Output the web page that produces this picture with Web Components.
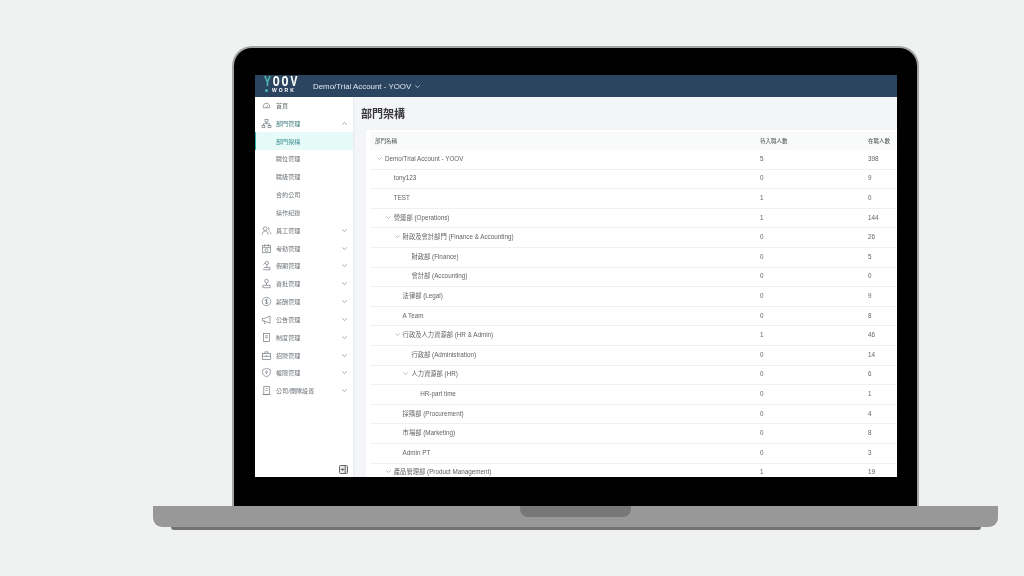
<!DOCTYPE html>
<html lang="zh-Hant">
<head>
<meta charset="utf-8">
<title>部門架構</title>
<style>
    html, body { margin: 0; height: 100%; }
    body { background: #f0f2f1; overflow: hidden; font-family: "Liberation Sans", "Noto Sans CJK TC", sans-serif; }
</style>
</head>
<body>
<laptop-frame>
    <app-header>Demo/Trial Account - YOOV</app-header>
    <div slot="sidebar"><side-nav></side-nav></div>
    <div slot="main"><dept-page></dept-page></div>
</laptop-frame>

<script>
const ICONS = {
    home: '<path d="M2.5 8.5a3.7 3.7 0 1 1 7 0z"/><path d="M6 8.3 7.4 5.6"/>',
    org: '<rect x="4.4" y="1.5" width="3.2" height="2.8"/><rect x="1.2" y="8" width="3" height="2.6"/><rect x="7.8" y="8" width="3" height="2.6"/><path d="M6 4.3V6.2M2.7 8V6.2H9.3V8"/>',
    people: '<circle cx="4.5" cy="4" r="2"/><path d="M1.2 10.5c.3-2.6 1.6-3.9 3.3-3.9s3 1.3 3.3 3.9"/><path d="M7.6 2.2a2 2 0 0 1 0 3.7M9 6.9c1 .6 1.6 1.8 1.8 3.2"/>',
    clock: '<rect x="1.8" y="2.6" width="8.4" height="8"/><path d="M4 1.2V4M8 1.2V4M1.8 5H10.2"/><circle cx="6" cy="7.8" r="1.6"/>',
    leave: '<circle cx="6.4" cy="3.2" r="1.8"/><path d="M6.4 5v3M2 10.6h8M3 8.2h6.6v2.4"/><path d="M2.6 4.8 4.4 3.4"/>',
    approve: '<circle cx="6" cy="3.4" r="2"/><path d="M6 5.4v2.4M2 8h8v2.6H2z"/>',
    money: '<circle cx="6" cy="6" r="4.6"/><path d="M7.5 4.4C7 3.8 5 3.6 4.7 4.8c-.3 1.4 2.8 1 2.7 2.5-.1 1.2-2.2 1.2-3 .4M6 3v6"/>',
    notice: '<path d="M1.6 4.8v2.8h2L9.8 10V2.4L3.6 4.8z"/><path d="M3.4 7.6 4 10.4h1.2"/>',
    rules: '<rect x="2.6" y="1.6" width="6.8" height="8.8"/><path d="M4.4 4.2h3.2M4.4 6.2h3.2"/>',
    jobs: '<rect x="1.5" y="3.8" width="9" height="6.6"/><path d="M4.3 3.8V2h3.4v1.8M1.5 6.8h9M6 6v1.6"/>',
    shield: '<path d="M6 1.4 10.2 3v3.2c0 2.2-1.8 3.7-4.2 4.4-2.4-.7-4.2-2.2-4.2-4.4V3z"/><circle cx="6" cy="5.2" r="1"/><path d="M6 6.2v1.6"/>',
    building: '<path d="M3 1.6h6.2v8.8H3zM1.6 10.4h9"/><path d="M5 4h2.2M5 6h2.2"/>',
}

const NAV = [
    { icon: "home", label: "首頁" },
    { icon: "org", label: "部門管理", open: true },
    { label: "部門架構", sub: true, active: true },
    { label: "職位管理", sub: true },
    { label: "職級管理", sub: true },
    { label: "合約公司", sub: true },
    { label: "操作紀錄", sub: true },
    { icon: "people", label: "員工管理", more: true },
    { icon: "clock", label: "考勤管理", more: true },
    { icon: "leave", label: "假期管理", more: true },
    { icon: "approve", label: "審批管理", more: true },
    { icon: "money", label: "薪酬管理", more: true },
    { icon: "notice", label: "公告管理", more: true },
    { icon: "rules", label: "制度管理", more: true },
    { icon: "jobs", label: "招聘管理", more: true },
    { icon: "shield", label: "權限管理", more: true },
    { icon: "building", label: "公司/團隊設置", more: true },
]

// name, level, has children, waiting, current
const ROWS = [
    ["Demo/Trial Account - YOOV", 0, true, 5, 398],
    ["tony123", 1, false, 0, 9],
    ["TEST", 1, false, 1, 0],
    ["營運部 (Operations)", 1, true, 1, 144],
    ["財政及會計部門 (Finance & Accounting)", 2, true, 0, 26],
    ["財政部 (Finance)", 3, false, 0, 5],
    ["會計部 (Accounting)", 3, false, 0, 0],
    ["法律部 (Legal)", 2, false, 0, 9],
    ["A Team", 2, false, 0, 8],
    ["行政及人力資源部 (HR & Admin)", 2, true, 1, 46],
    ["行政部 (Administration)", 3, false, 0, 14],
    ["人力資源部 (HR)", 3, true, 0, 6],
    ["HR-part time", 4, false, 0, 1],
    ["採購部 (Procurement)", 2, false, 0, 4],
    ["市場部 (Marketing)", 2, false, 0, 8],
    ["Admin PT", 2, false, 0, 3],
    ["產品管理部 (Product Management)", 1, true, 1, 19],
]

const chevron = (dir) => `<svg width="7" height="7" viewBox="0 0 8 8" fill="none" stroke="currentColor" stroke-width=".8"><path d="${dir == "up" ? "M1.5 5.2 4 2.8 6.5 5.2" : "M1.5 2.8 4 5.2 6.5 2.8"}"/></svg>`

customElements.define("laptop-frame", class extends HTMLElement {
    connectedCallback() {
        this.attachShadow({mode: "open"}).innerHTML = `
            <style>
                :host { display: flex; flex-direction: column; align-items: center; width: 845px; margin-left: 153px; padding-top: 46px; }
                .lid {
                    box-sizing: border-box;
                    width: 687px;
                    height: 460px;
                    padding: 27px 21px 29px 21px;
                    background: #000;
                    border: 2px solid #a3a5a5;
                    border-bottom: 0;
                    border-radius: 20px 20px 0 0;
                }
                .screen { display: flex; flex-direction: column; width: 642px; height: 402px; background: #f3f5f9; overflow: hidden; filter: blur(.3px); }
                .body { display: flex; flex: 1; min-height: 0; }
                .base { display: flex; justify-content: center; width: 845px; height: 21px; background: #989898; border-radius: 0 0 9px 9px; }
                .notch { width: 111px; height: 11px; background: #777; border-radius: 0 0 8px 8px; }
                .foot { width: 810px; height: 3px; background: #737373; border-radius: 0 0 3px 3px; }
                ::slotted([slot="sidebar"]) { flex: none; width: 98px; display: flex; }
                ::slotted([slot="main"]) { flex: 1; min-width: 0; }
            </style>
            <div class="lid">
                <div class="screen">
                    <slot></slot>
                    <div class="body">
                        <slot name="sidebar"></slot>
                        <slot name="main"></slot>
                    </div>
                </div>
            </div>
            <div class="base"><div class="notch"></div></div>
            <div class="foot"></div>
        `
    }
})

customElements.define("app-header", class extends HTMLElement {
    connectedCallback() {
        this.attachShadow({mode: "open"}).innerHTML = `
            <style>
                :host { display: flex; flex: none; align-items: center; height: 22px; padding-left: 9px; background: #2b4560; color: #dfe6ec; font-size: 7.9px; }
                .logo { display: flex; flex-direction: column; width: 49px; margin-bottom: 3px; color: #fff; font-weight: 700; line-height: 1; }
                .yoov { height: 11px; line-height: 11px; font-size: 11.5px; letter-spacing: 1.9px; font-family: "Liberation Mono", monospace; transform: scaleY(1.25); transform-origin: 0 45%; }
                .yoov b { color: #4bb8b0; }
                .work { display: flex; align-items: center; gap: 4px; height: 5px; margin-top: 1px; font-size: 5px; letter-spacing: 2px; }
                .work i { width: 3px; height: 3px; margin-left: 1px; border-radius: 50%; background: #4bb8b0; }
                .account { display: flex; align-items: center; gap: 3px; }
            </style>
            <div class="logo">
                <div class="yoov"><b>Y</b>OOV</div>
                <div class="work"><i></i>WORK</div>
            </div>
            <div class="account"><slot></slot>${chevron("down")}</div>
        `
    }
})

customElements.define("nav-item", class extends HTMLElement {
    connectedCallback() {
        const icon = this.getAttribute("icon")
        const arrow = this.getAttribute("arrow")
        this.attachShadow({mode: "open"}).innerHTML = `
            <style>
                :host { display: flex; align-items: center; box-sizing: border-box; height: 17.85px; padding: 0 5px 0 6px; color: #6d747a; font-size: 6.1px; }
                :host([open]) { color: #3f7d80; }
                :host([sub]) { padding-left: 21px; }
                :host([active]) { background: #e6faf8; color: #3f8f92; box-shadow: inset 1px 0 #2fb5ab; }
                .icon { flex: none; width: 11px; height: 11px; margin-right: 4px; color: #7a8085; }
                .label { flex: 1; white-space: nowrap; }
                .arrow { display: flex; color: #7f868b; }
            </style>
            ${icon ? `<svg class="icon" viewBox="0 0 12 12" fill="none" stroke="currentColor" stroke-width=".8">${ICONS[icon]}</svg>` : ""}
            <span class="label"><slot></slot></span>
            ${arrow ? `<span class="arrow">${chevron(arrow)}</span>` : ""}
        `
    }
})

customElements.define("side-nav", class extends HTMLElement {
    connectedCallback() {
        const root = this.attachShadow({mode: "open"})
        root.innerHTML = `
            <style>
                :host { display: flex; flex-direction: column; flex: 1; background: #fff; box-shadow: 1px 0 2px #0000000d; }
                nav { flex: 1; margin-top: -.6px; }
                .collapse { display: flex; justify-content: flex-end; padding: 0 5px 3px 0; color: #666; }
            </style>
            <nav></nav>
            <div class="collapse">
                <svg width="9" height="9" viewBox="0 0 9 9" fill="#e8e8e8" stroke="currentColor" stroke-width="1"><rect x=".5" y=".5" width="8" height="8" rx="1"/><path d="M1.8 4.5H4.6M3.4 3.2 4.7 4.5 3.4 5.8M6.2 1V8" fill="none"/></svg>
            </div>
        `
        const nav = root.querySelector("nav")
        NAV.forEach(item => {
            const el = document.createElement("nav-item")
            el.textContent = item.label
            if (item.icon) el.setAttribute("icon", item.icon)
            if (item.sub) el.setAttribute("sub", "")
            if (item.active) el.setAttribute("active", "")
            if (item.open) { el.setAttribute("open", ""); el.setAttribute("arrow", "up") }
            if (item.more) el.setAttribute("arrow", "down")
            nav.appendChild(el)
        })
    }
})

customElements.define("dept-row", class extends HTMLElement {
    connectedCallback() {
        const level = +this.getAttribute("level") || 0
        const toggle = this.hasAttribute("toggle")
        this.attachShadow({mode: "open"}).innerHTML = `
            <style>
                :host { display: grid; grid-template-columns: 390px 108px 1fr; align-items: center; box-sizing: border-box; height: 19.6px; padding-bottom: 2px; color: #5f6367; font-size: 6.3px; border-bottom: 1px solid #eef0f1; white-space: nowrap; }
                .name { display: flex; align-items: center; padding-left: ${6 + level * 8.8}px; }
                .toggle { flex: none; display: flex; width: 9px; color: #9aa0a4; }
                ::slotted(span) { display: block; }
            </style>
            <div class="name"><span class="toggle">${toggle ? chevron("down") : ""}</span><slot name="name"></slot></div>
            <div><slot name="waiting"></slot></div>
            <div><slot name="current"></slot></div>
        `
    }
})

customElements.define("dept-page", class extends HTMLElement {
    connectedCallback() {
        const root = this.attachShadow({mode: "open"})
        root.innerHTML = `
            <style>
                :host { display: block; height: 100%; padding-left: 8px; overflow: hidden; }
                h1 { margin: 0; height: 33px; line-height: 34px; font-size: 11px; font-weight: 700; color: #3a3a3a; }
                .card { background: #fff; margin-left: 5px; padding: 2px 0 0 4px; height: 400px; }
                .head { display: grid; grid-template-columns: 390px 108px 1fr; align-items: center; height: 18px; background: #f9fafa; color: #44484c; font-size: 5.5px; }
                .head span:first-child { padding-left: 5px; }
            </style>
            <h1>部門架構</h1>
            <div class="card">
                <div class="head"><span>部門名稱</span><span>待入職人數</span><span>在職人數</span></div>
                <div id="rows"></div>
            </div>
        `
        const box = root.getElementById("rows")
        ROWS.forEach(([name, level, toggle, waiting, current]) => {
            const row = document.createElement("dept-row")
            row.setAttribute("level", level)
            if (toggle) row.setAttribute("toggle", "")
            for (const [slot, text] of [["name", name], ["waiting", waiting], ["current", current]]) {
                const s = document.createElement("span")
                s.slot = slot
                s.textContent = text
                row.appendChild(s)
            }
            box.appendChild(row)
        })
    }
})
</script>
</body>
</html>
